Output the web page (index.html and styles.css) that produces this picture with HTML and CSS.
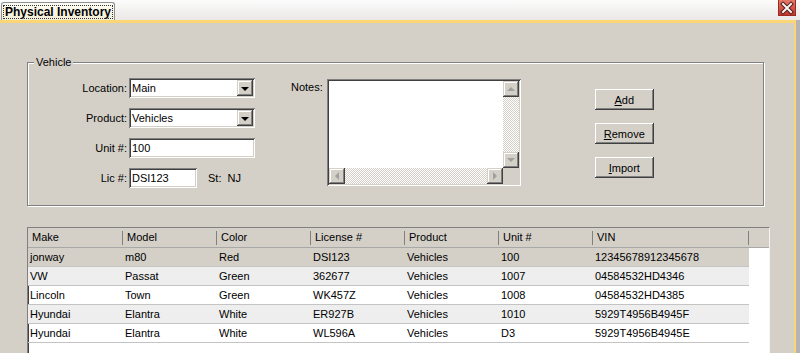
FILE: index.html
```html
<!DOCTYPE html>
<html>
<head>
<meta charset="utf-8">
<title>Physical Inventory</title>
<link rel="stylesheet" href="styles.css">
</head>
<body>
	<div class="tabstrip">
		<div class="tab"><span class="tab_text">Physical Inventory</span></div>
		<div class="close_btn">
			<svg width="16" height="16" viewBox="0 0 16 16">
				<path d="M4 4 L12 12 M12 4 L4 12" stroke="#5a1a14" stroke-width="4" stroke-linecap="square" />
				<path d="M4 4 L12 12 M12 4 L4 12" stroke="#f4f4f4" stroke-width="2" stroke-linecap="square" />
			</svg>
		</div>
	</div>

	<div class="page">
		<fieldset class="group">
			<legend>Vehicle</legend>
			<div class="group_body">
				<div class="form">
					<span class="form_label">Location:</span>
					<div class="combo"><span class="combo_val">Main</span><i class="drop"><b></b></i></div>

					<span class="form_label">Product:</span>
					<div class="combo"><span class="combo_val">Vehicles</span><i class="drop"><b></b></i></div>

					<span class="form_label">Unit #:</span>
					<div class="field">100</div>

					<span class="form_label">Lic #:</span>
					<div class="lic_row">
						<div class="field field_short">DSI123</div>
						<span class="st_label">St:</span>
						<span class="st_val">NJ</span>
					</div>
				</div>

				<div class="notes">
					<span class="notes_label">Notes:</span>
					<div class="memo">
						<div class="memo_text"></div>
						<div class="vbar">
							<i class="sbtn"><b class="arr arr_up"></b></i>
							<span class="track"></span>
							<i class="sbtn"><b class="arr arr_down"></b></i>
						</div>
						<div class="hbar">
							<i class="sbtn"><b class="arr arr_left"></b></i>
							<span class="track"></span>
							<i class="sbtn"><b class="arr arr_right"></b></i>
						</div>
						<div class="corner"></div>
					</div>
				</div>

				<ul class="buttons">
					<li><a class="btn"><u>A</u>dd</a></li>
					<li><a class="btn"><u>R</u>emove</a></li>
					<li><a class="btn"><u>I</u>mport</a></li>
				</ul>
			</div>
		</fieldset>

		<div class="list">
			<div class="list_head">
				<span class="hcell">Make</span>
				<span class="hcell">Model</span>
				<span class="hcell">Color</span>
				<span class="hcell">License #</span>
				<span class="hcell">Product</span>
				<span class="hcell">Unit #</span>
				<span class="hcell">VIN</span>
			</div>
			<div class="row row_sel">
				<span>jonway</span><span>m80</span><span>Red</span><span>DSI123</span><span>Vehicles</span><span>100</span><span>12345678912345678</span>
			</div>
			<div class="row row_alt">
				<span>VW</span><span>Passat</span><span>Green</span><span>362677</span><span>Vehicles</span><span>1007</span><span>04584532HD4346</span>
			</div>
			<div class="row">
				<span>Lincoln</span><span>Town</span><span>Green</span><span>WK457Z</span><span>Vehicles</span><span>1008</span><span>04584532HD4385</span>
			</div>
			<div class="row row_alt">
				<span>Hyundai</span><span>Elantra</span><span>White</span><span>ER927B</span><span>Vehicles</span><span>1010</span><span>5929T4956B4945F</span>
			</div>
			<div class="row">
				<span>Hyundai</span><span>Elantra</span><span>White</span><span>WL596A</span><span>Vehicles</span><span>D3</span><span>5929T4956B4945E</span>
			</div>
		</div>
	</div>
</body>
</html>
```

FILE: styles.css
```css
html, body, div, ul, li, fieldset, legend {
	padding: 0;
	margin: 0;
}

body {
	width: 800px;
	height: 353px;
	overflow: hidden;
	background: #b4b4b4;
	font-family: "Liberation Sans", Arial, sans-serif;
	font-size: 11px;
	color: #000;
	display: flex;
	flex-direction: column;
}

li {
	list-style: none;
}

/* tab strip */
.tabstrip {
	height: 20px;
	display: flex;
	justify-content: space-between;
	align-items: flex-start;
	background: linear-gradient(#fcfcfc, #ebe8e6);
}

.tab {
	margin: 2px 0 0 1px;
	width: 112px;
	height: 17px;
	border: 1px solid #8c9294;
	border-bottom: none;
	border-radius: 3px 3px 0 0;
	background: linear-gradient(#fdfcf4, #f3eed6);
	display: flex;
	justify-content: center;
	align-items: center;
}

.tab_text {
	font-weight: bold;
	font-size: 12px;
	line-height: 12px;
	padding: 0 1px;
	outline: 1px dotted #333;
}

.close_btn {
	width: 16px;
	height: 15px;
	margin-right: 4px;
	background: linear-gradient(#e37a6c, #c1352b);
	border: 1px solid #9a2a22;
	border-top: none;
	display: flex;
	align-items: center;
	justify-content: center;
}

/* page */
.page {
	flex: 1;
	width: 794px;
	background: #d4d0c8;
	border-top: 3px solid #fad674;
	border-right: 2px solid #fad674;
	display: flex;
	flex-direction: column;
	min-height: 0;
}

.group {
	margin: 33px 0 0 27px;
	width: 737px;
	box-sizing: border-box;
	border: 1px solid #808080;
	box-shadow: inset 1px 1px #fff, 1px 1px #fff;
	padding: 9px 0 17px 0;
}

.group legend {
	margin-left: 6px;
	padding: 0 2px;
	line-height: 13px;
	background: #d4d0c8;
}

.group_body {
	display: flex;
	align-items: flex-start;
}

.form {
	display: grid;
	grid-template-columns: 98px 126px;
	grid-auto-rows: 20px;
	column-gap: 2px;
	row-gap: 10px;
	margin-left: 1px;
}

.form_label {
	text-align: right;
	line-height: 20px;
}

.combo, .field {
	box-sizing: border-box;
	height: 20px;
	background: #fff;
	box-shadow: inset 1px 1px #808080, inset -1px -1px #fff, inset 2px 2px #404040, inset -2px -2px #d4d0c8;
	display: flex;
	align-items: center;
	padding: 0 2px 0 3px;
	line-height: 16px;
}

.combo_val {
	flex: 1;
}

.drop {
	width: 16px;
	height: 16px;
	box-sizing: border-box;
	background: #d4d0c8;
	box-shadow: inset -1px -1px #404040, inset 1px 1px #d4d0c8, inset -2px -2px #808080, inset 2px 2px #fff;
	display: flex;
	align-items: center;
	justify-content: center;
}

.drop b {
	width: 0;
	height: 0;
	border-left: 4px solid transparent;
	border-right: 4px solid transparent;
	border-top: 4px solid #000;
	margin-top: 1px;
}

.lic_row {
	display: flex;
	align-items: center;
}

.field_short {
	width: 68px;
}

.st_label {
	margin-left: 11px;
}

.st_val {
	margin-left: 6px;
}

/* notes */
.notes {
	display: flex;
	align-items: flex-start;
	margin: 1px 0 0 36px;
}

.notes_label {
	margin: 2px 4px 0 0;
}

.memo {
	width: 194px;
	height: 107px;
	box-sizing: border-box;
	padding: 2px;
	background: #fff;
	box-shadow: inset 1px 1px #808080, inset -1px -1px #fff, inset 2px 2px #404040, inset -2px -2px #d4d0c8;
	display: grid;
	grid-template-columns: 1fr 16px;
	grid-template-rows: 1fr 16px;
}

.vbar, .hbar {
	display: flex;
}

.vbar {
	flex-direction: column;
}

.track {
	flex: 1;
	background: repeating-conic-gradient(#fff 0 25%, #d4d0c8 0 50%) 0 0 / 2px 2px;
}

.sbtn {
	width: 16px;
	height: 16px;
	box-sizing: border-box;
	background: #d4d0c8;
	box-shadow: inset -1px -1px #404040, inset 1px 1px #d4d0c8, inset -2px -2px #808080, inset 2px 2px #fff;
	display: flex;
	align-items: center;
	justify-content: center;
}

.arr {
	width: 0;
	height: 0;
}

.arr_up {
	border-left: 4px solid transparent;
	border-right: 4px solid transparent;
	border-bottom: 4px solid #a0a0a0;
}

.arr_down {
	border-left: 4px solid transparent;
	border-right: 4px solid transparent;
	border-top: 4px solid #a0a0a0;
}

.arr_left {
	border-top: 4px solid transparent;
	border-bottom: 4px solid transparent;
	border-right: 4px solid #a0a0a0;
}

.arr_right {
	border-top: 4px solid transparent;
	border-bottom: 4px solid transparent;
	border-left: 4px solid #a0a0a0;
}

.corner {
	background: #d4d0c8;
}

/* buttons */
.buttons {
	margin: 11px 0 0 74px;
	display: flex;
	flex-direction: column;
	gap: 13px;
}

.btn {
	display: flex;
	align-items: center;
	justify-content: center;
	width: 59px;
	height: 21px;
	box-sizing: border-box;
	background: #d4d0c8;
	box-shadow: inset -1px -1px #404040, inset 1px 1px #fff, inset -2px -2px #808080, inset 2px 2px #d4d0c8;
	cursor: pointer;
}

/* list */
.list {
	margin: 21px 0 0 27px;
	width: 743px;
	flex: 1;
	box-sizing: border-box;
	background: #fff;
	border-top: 1px solid #808080;
	border-left: 1px solid #808080;
	border-right: 1px solid #f4f4f4;
	box-shadow: inset 1px 1px #404040;
}

.list_head {
	height: 19px;
	display: flex;
	background: #d4d0c8;
	border-bottom: 1px solid #a8a8a8;
}

.hcell {
	box-sizing: border-box;
	width: 94px;
	padding-left: 4px;
	line-height: 19px;
	background: linear-gradient(#808080, #808080) right 3px / 1px 14px no-repeat;
}

.hcell:first-child, .row span:first-child {
	width: 95px;
}

.hcell:last-child, .row span:last-child {
	width: 156px;
}

.row {
	display: flex;
	width: 721px;
	height: 18px;
	border-bottom: 1px solid #c4c4c4;
	line-height: 18px;
}

.row span {
	width: 94px;
	padding-left: 2px;
	box-sizing: border-box;
}

.row_sel {
	background: #d4d0c8;
}

.row_alt {
	background: #eeeeee;
}
```
